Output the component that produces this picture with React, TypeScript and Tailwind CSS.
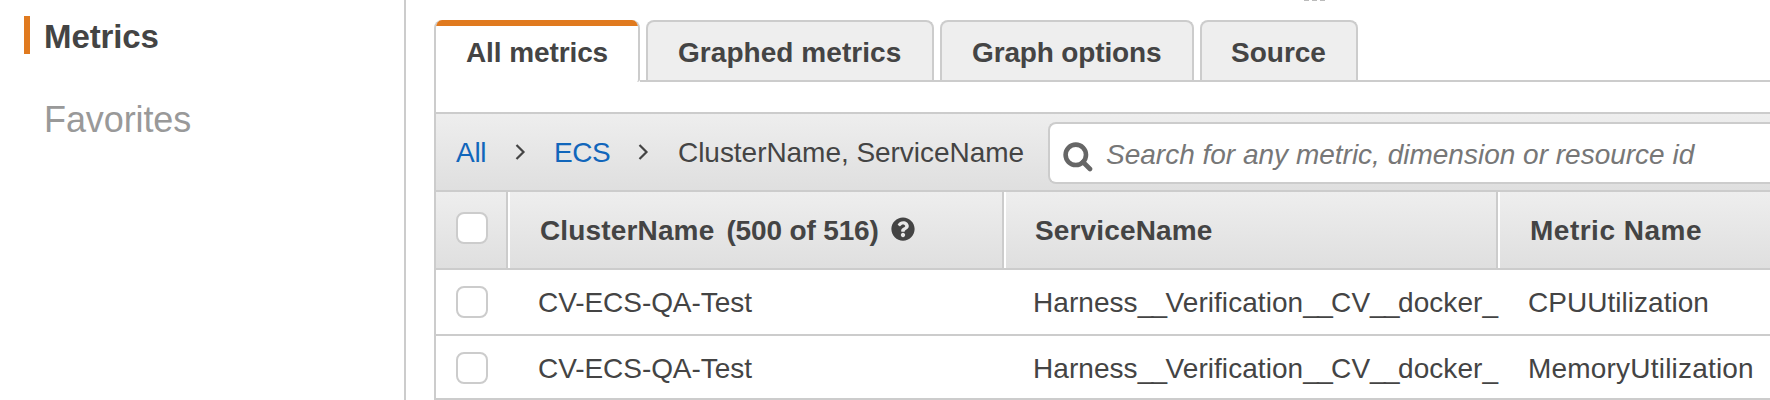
import React from "react";
import { FaQuestionCircle } from "react-icons/fa";

const rows = [
  { cluster: "CV-ECS-QA-Test", service: "Harness__Verification__CV__docker_", metric: "CPUUtilization", height: "h-[66px]", tracking: "tracking-[0.03px]" },
  { cluster: "CV-ECS-QA-Test", service: "Harness__Verification__CV__docker_", metric: "MemoryUtilization", height: "h-16", tracking: "tracking-[0.2px]" },
];

const tabs = [
  { label: "Graphed metrics", style: "w-72 pl-[30px] tracking-[0.05px]" },
  { label: "Graph options", style: "w-[254px] pl-[30px] tracking-[-0.15px]" },
  { label: "Source", style: "w-[158px] pl-[29px]" },
];

function Checkbox() {
  return <span role="checkbox" aria-checked="false" className="block size-8 shrink-0 rounded-lg border-2 border-[#ccc] bg-white" />;
}

function Chevron() {
  return (
    <svg width="12" height="18" viewBox="0 0 12 18" className="mb-0.5 shrink-0">
      <path d="M1.5 2 L8.5 9 L1.5 16" fill="none" stroke="#444" strokeWidth="2.2" />
    </svg>
  );
}

function SearchIcon() {
  return (
    <svg width="30" height="30" viewBox="0 0 30 30" className="mt-[5px] shrink-0">
      <circle cx="12.8" cy="12.8" r="10.2" fill="none" stroke="#666" strokeWidth="4.6" />
      <path d="M20 20 L27 27" fill="none" stroke="#666" strokeWidth="4.6" strokeLinecap="round" />
    </svg>
  );
}

/* Underscores are set a little tighter than the letters around them. */
function ServiceLabel({ name }: { name: string }) {
  return (
    <>
      {name.split(/(_+)/).map((part, i) => (
        <span key={i} className={part.startsWith("_") ? "tracking-[-1.6px]" : "tracking-[0.05px]"}>
          {part}
        </span>
      ))}
    </>
  );
}

export default function App() {
  return (
    <div className="flex h-[400px] w-[1770px] overflow-hidden bg-white font-['Liberation_Sans',Arial,sans-serif] text-[28px] leading-[33px] text-[#444]">
      <aside className="h-full w-[406px] shrink-0 border-r-2 border-[#ccc] pt-4 pl-6">
        <div className="flex h-[38px] items-center border-l-[6px] border-[#e07a1f] pt-[3px] pl-[14px] text-[33px] font-bold tracking-[-0.1px]">Metrics</div>
        <div className="mt-[46px] flex h-10 items-center pl-5 text-4xl tracking-[-0.1px] text-[#999]">Favorites</div>
      </aside>
      <main className="ml-7 flex min-w-0 flex-1 flex-col">
        <div className="flex h-5 shrink-0 justify-start gap-[3px] pl-[870px]">
          <i className="h-px w-[5px] bg-[#bbb]" />
          <i className="h-px w-[5px] bg-[#bbb]" />
          <i className="h-px w-[5px] bg-[#bbb]" />
        </div>
        <nav className="flex h-[62px] shrink-0 font-bold whitespace-nowrap">
          <div className="relative w-[206px] shrink-0 overflow-hidden rounded-t-lg rounded-br-[3px] border-x-2 border-[#ccc] pt-4 pl-[30px] tracking-[-0.1px]">
            <span className="absolute inset-x-0 top-0 h-1.5 bg-[#e07a1f]" />
            All metrics
          </div>
          <div className="flex flex-1 gap-1.5 border-b-2 border-[#ccc] pl-1.5">
            {tabs.map((t) => (
              <div key={t.label} className={`${t.style} shrink-0 rounded-t-lg border-2 border-b-0 border-[#ccc] bg-[#eee] pt-3.5`}>
                {t.label}
              </div>
            ))}
          </div>
        </nav>
        <section className="flex flex-1 flex-col border-l-2 border-[#ccc] pt-[30px] whitespace-nowrap">
          <div className="flex h-20 shrink-0 border-y-2 border-[#ccc] bg-linear-to-b from-[#eee] to-[#dfdfdf] pl-5">
            <div className="flex h-[76px] w-[592px] shrink-0 items-center pt-px">
              <a className="w-[59px] tracking-[-0.3px] text-[#1166bb]">All</a>
              <Chevron />
              <a className="ml-[27px] w-[84px] tracking-[-0.4px] text-[#1166bb]">ECS</a>
              <Chevron />
              <span className="ml-7 tracking-[-0.04px]">ClusterName, ServiceName</span>
            </div>
            <div className="mt-2 flex h-[62px] flex-1 items-center rounded-l-lg border-2 border-r-0 border-[#ccc] bg-white pt-[3px] pl-[13px]">
              <SearchIcon />
              <span className="ml-[13px] text-[#777] italic">Search for any metric, dimension or resource id</span>
            </div>
          </div>
          <div className="flex h-[78px] shrink-0 border-b-2 border-[#ccc] bg-linear-to-b from-[#eee] to-[#dfdfdf] font-bold">
            <div className="w-[72px] shrink-0 border-r-2 border-[#ccc] pt-5 pl-5">
              <Checkbox />
            </div>
            <div className="flex w-[496px] shrink-0 items-center border-r-2 border-l-2 border-r-[#ccc] border-l-white pt-px pl-[30px]">
              <span className="tracking-[0.15px]">ClusterName</span>
              <span className="ml-3 tracking-[-0.15px]">(500 of 516)</span>
              <FaQuestionCircle className="mb-[3px] ml-3 size-6" />
            </div>
            <div className="flex w-[494px] shrink-0 items-center border-r-2 border-l-2 border-r-[#ccc] border-l-white pt-px pl-[29px] tracking-[0.15px]">ServiceName</div>
            <div className="flex flex-1 items-center border-l-2 border-white pt-px pl-[30px] tracking-[0.5px]">Metric Name</div>
          </div>
          {rows.map((r) => (
            <div key={r.metric} className={`${r.height} flex shrink-0 items-start border-b-2 border-[#ccc] pt-4`}>
              <div className="w-[102px] shrink-0 pl-5">
                <Checkbox />
              </div>
              <div className="w-[495px] shrink-0 tracking-[-0.06px]">{r.cluster}</div>
              <div className="w-[465px] shrink-0">
                <ServiceLabel name={r.service} />
              </div>
              <div className={`${r.tracking} ml-[30px]`}>{r.metric}</div>
            </div>
          ))}
        </section>
      </main>
    </div>
  );
}
